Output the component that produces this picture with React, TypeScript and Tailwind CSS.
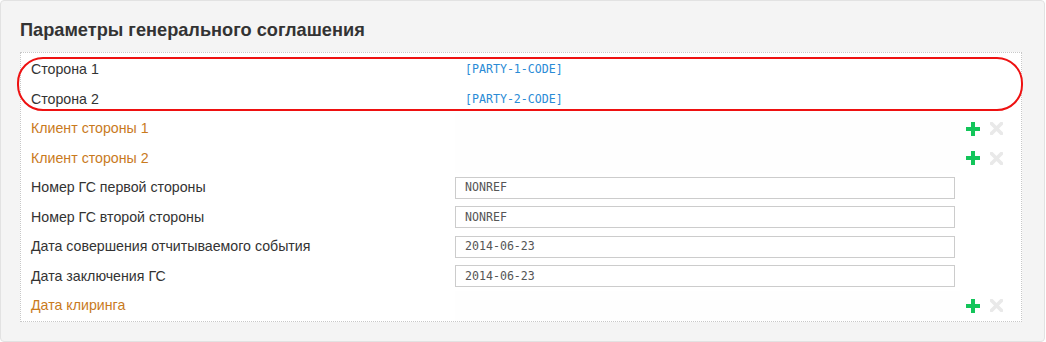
import React from "react";

type Row =
  | { kind: "code"; label: string; value: string }
  | { kind: "group"; label: string }
  | { kind: "input"; label: string; value: string };

const ROWS: Row[] = [
  { kind: "code", label: "Сторона 1", value: "[PARTY-1-CODE]" },
  { kind: "code", label: "Сторона 2", value: "[PARTY-2-CODE]" },
  { kind: "group", label: "Клиент стороны 1" },
  { kind: "group", label: "Клиент стороны 2" },
  { kind: "input", label: "Номер ГС первой стороны", value: "NONREF" },
  { kind: "input", label: "Номер ГС второй стороны", value: "NONREF" },
  { kind: "input", label: "Дата совершения отчитываемого события", value: "2014-06-23" },
  { kind: "input", label: "Дата заключения ГС", value: "2014-06-23" },
  { kind: "group", label: "Дата клиринга" },
];

const mono = "font-['DejaVu_Sans_Mono','Liberation_Mono',monospace] text-[11.6px]";

const PlusIcon = () => (
  <svg width="14" height="14" viewBox="0 0 14 14">
    <path d="M5 0h4v5h5v4H9v5H5V9H0V5h5z" fill="#13c55a" />
  </svg>
);

const CrossIcon = () => (
  <svg width="13" height="13" viewBox="0 0 13 13">
    <path
      d="M1.5 1.5l10 10M11.5 1.5l-10 10"
      stroke="#e9e9e9"
      strokeWidth="3.6"
      strokeLinecap="round"
    />
  </svg>
);

const FormRow: React.FC<{ row: Row }> = ({ row }) => {
  const isGroup = row.kind === "group";
  return (
    <div className="flex items-center h-[29.5px]">
      <div
        className={
          "w-[434px] pl-[10px] text-[14.2px] " +
          (isGroup ? "text-[#c97a1d]" : "text-[#333]")
        }
      >
        {row.label}
      </div>
      {row.kind === "code" && (
        <div className={mono + " pl-[10px] text-[#2a8bd6]"}>{row.value}</div>
      )}
      {row.kind === "input" && (
        <div
          className={
            mono +
            " w-[500px] h-[22px] border border-[#cccccc] bg-white pl-[9px] flex items-center text-[#555]"
          }
        >
          {row.value}
        </div>
      )}
      {isGroup && (
        <div className="flex-1 flex items-center self-stretch">
          <div className="w-[505px] h-full bg-[#fefefe]" />
          <div className="flex items-center gap-[10px] ml-[6px]">
            <PlusIcon />
            <CrossIcon />
          </div>
        </div>
      )}
    </div>
  );
};

export default function App() {
  return (
    <div className="w-[1045px] h-[342px] bg-[#f4f4f4] border border-[#e2e2e2] rounded-[4px] font-['Liberation_Sans',Arial,sans-serif] relative">
      <h2 className="pl-[19px] pt-[18px] h-[51px] text-[18.2px] font-bold text-[#333] leading-[22px]">
        Параметры генерального соглашения
      </h2>
      <div className="ml-[19px] w-[1002px] h-[270px] border border-dotted border-[#c8c8c8] bg-white pt-[2px]">
        {ROWS.map((row, i) => (
          <FormRow key={i} row={row} />
        ))}
      </div>
      <div className="absolute left-[16px] top-[56px] w-[1006px] h-[54px] border-2 border-[#ee1111] rounded-[26px] pointer-events-none" />
    </div>
  );
}
